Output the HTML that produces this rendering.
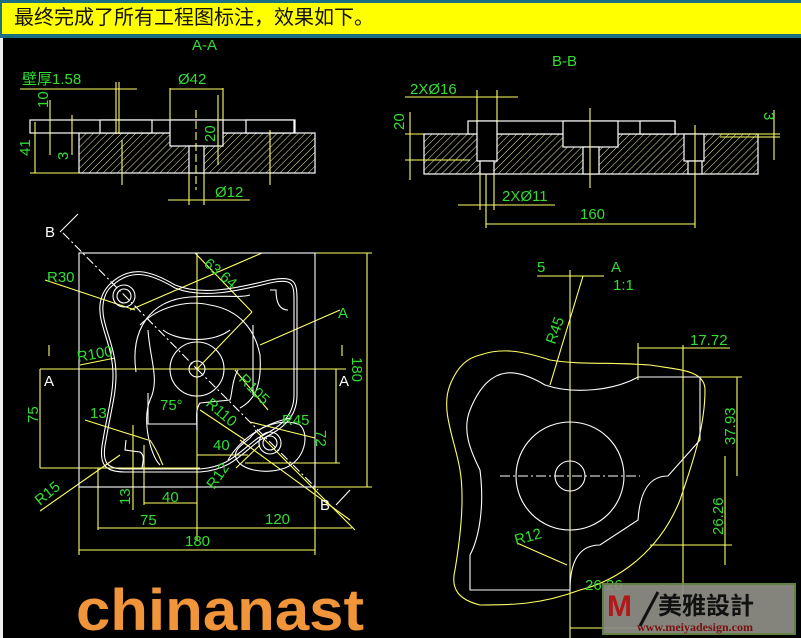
<!DOCTYPE html>
<html><head><meta charset="utf-8"><style>
html,body{margin:0;padding:0;background:#000;width:801px;height:638px;overflow:hidden}
.hdr{position:absolute;left:0;top:0;width:801px;height:38px;background:#1d6f84}
.hdr div{position:absolute;left:2px;top:3px;width:799px;height:31px;background:#ffff00;font-family:"Liberation Sans","Noto Sans CJK SC",sans-serif;font-size:20px;line-height:31px;color:#111;padding-left:12px;box-sizing:border-box}
svg{position:absolute;left:0;top:0}
.g{fill:#33dd33;font-family:"Liberation Sans Narrow","Liberation Sans",sans-serif;font-size:15px}
</style></head><body>
<div class="hdr"><div>最终完成了所有工程图标注，效果如下。</div></div>
<svg width="801" height="638" viewBox="0 0 801 638">
<defs><pattern id="h" width="5" height="5" patternUnits="userSpaceOnUse" patternTransform="rotate(45)"><line x1="0" y1="0" x2="0" y2="5" stroke="#eeeeaa" stroke-width="1"/></pattern></defs>
<rect x="0" y="38" width="3" height="600" fill="#eee"/>
<!-- A-A -->
<text class="g" x="192" y="50">A-A</text>
<g stroke="#fff" fill="none" stroke-width="1.2">
<rect x="79" y="133" width="236" height="40" fill="url(#h)"/>
<rect x="30" y="120" width="265" height="13" fill="#000"/>
<rect x="170" y="120" width="53" height="26" fill="#000"/>
<rect x="189" y="146" width="15" height="27" fill="#000"/>
<rect x="100" y="120" width="52" height="13" fill="#000"/>
<rect x="246" y="120" width="48" height="13" fill="#000"/>
</g>
<g stroke="#ffff66" fill="none" stroke-width="1.1">
<line x1="20" y1="89" x2="137" y2="89"/><line x1="116" y1="82" x2="116" y2="134"/><line x1="119" y1="82" x2="119" y2="134"/>
<line x1="35" y1="122" x2="35" y2="173"/><line x1="30" y1="173" x2="80" y2="173"/>
<line x1="50" y1="100" x2="50" y2="155"/><line x1="72" y1="115" x2="72" y2="155"/>
<line x1="170" y1="88" x2="170" y2="120"/><line x1="223" y1="88" x2="223" y2="120"/><line x1="170" y1="89" x2="223" y2="89"/>
<line x1="218" y1="95" x2="218" y2="165"/><line x1="196" y1="110" x2="196" y2="190" stroke-dasharray="8 3"/>
<line x1="168" y1="200" x2="250" y2="200"/><line x1="189" y1="173" x2="189" y2="205"/><line x1="204" y1="173" x2="204" y2="205"/>
<line x1="122" y1="140" x2="122" y2="185"/><line x1="270" y1="130" x2="270" y2="185"/>
</g>
<text class="g" x="22" y="84" font-size="13">壁厚1.58</text>
<text class="g" x="178" y="84" font-size="16">Ø42</text>
<text class="g" x="215" y="197" font-size="16">Ø12</text>
<text class="g" transform="translate(48,108) rotate(-90)">10</text>
<text class="g" transform="translate(30,156) rotate(-90)">41</text>
<text class="g" transform="translate(68,160) rotate(-90)">3</text>
<text class="g" transform="translate(215,142) rotate(-90)">20</text>
<!-- B-B -->
<text class="g" x="552" y="66">B-B</text>
<g stroke="#fff" fill="none" stroke-width="1.2">
<rect x="424" y="134" width="334" height="40" fill="url(#h)"/>
<rect x="468" y="121" width="207" height="13" fill="#000"/>
<rect x="563" y="121" width="55" height="26" fill="#000"/>
<rect x="583" y="147" width="16" height="27" fill="#000"/>
<rect x="477" y="121" width="20" height="40" fill="#000"/>
<rect x="480" y="161" width="14" height="13" fill="#000"/>
<rect x="684" y="134" width="20" height="27" fill="#000"/>
<rect x="688" y="161" width="14" height="13" fill="#000"/>
<rect x="640" y="121" width="35" height="13" fill="#000"/>
</g>
<g stroke="#ffff66" fill="none" stroke-width="1.1">
<line x1="405" y1="97" x2="518" y2="97"/><line x1="477" y1="90" x2="477" y2="121"/><line x1="497" y1="90" x2="497" y2="121"/>
<line x1="410" y1="112" x2="410" y2="180"/><line x1="405" y1="134" x2="424" y2="134"/><line x1="405" y1="160" x2="470" y2="160"/>
<line x1="458" y1="205" x2="555" y2="205"/><line x1="480" y1="174" x2="480" y2="210"/><line x1="494" y1="174" x2="494" y2="210"/>
<line x1="486" y1="224" x2="695" y2="224"/><line x1="486" y1="174" x2="486" y2="228"/><line x1="695" y1="125" x2="695" y2="228"/>
<line x1="590" y1="108" x2="590" y2="188"/>
<line x1="774" y1="110" x2="774" y2="160"/><line x1="720" y1="134" x2="780" y2="134"/><line x1="720" y1="137" x2="780" y2="137"/>
</g>
<text class="g" x="410" y="94">2XØ16</text>
<text class="g" x="502" y="201">2XØ11</text>
<text class="g" x="580" y="219">160</text>
<text class="g" transform="translate(404,130) rotate(-90)">20</text>
<text class="g" transform="translate(764,112) rotate(90)">3</text>
<!-- plan view -->
<g stroke="#ffff66" fill="none" stroke-width="1.1">
<line x1="40" y1="369" x2="346" y2="369"/><line x1="197" y1="253" x2="197" y2="540"/>
<line x1="79" y1="487" x2="372" y2="487"/><line x1="315" y1="253" x2="372" y2="253"/>
<line x1="367" y1="253" x2="367" y2="487"/>
<line x1="40" y1="369" x2="40" y2="468"/><line x1="40" y1="468" x2="200" y2="468"/>
<line x1="336" y1="369" x2="336" y2="463"/><line x1="245" y1="463" x2="340" y2="463"/>
<line x1="79" y1="487" x2="79" y2="555"/><line x1="315" y1="487" x2="315" y2="555"/><line x1="79" y1="550" x2="315" y2="550"/>
<line x1="98" y1="468" x2="98" y2="530"/><line x1="98" y1="528" x2="352" y2="528"/>
<line x1="133" y1="425" x2="133" y2="510"/><line x1="144" y1="445" x2="144" y2="505"/><line x1="144" y1="503" x2="197" y2="503"/>
<line x1="197" y1="455" x2="248" y2="455"/>
<line x1="130" y1="310" x2="262" y2="253"/><line x1="195" y1="253" x2="252" y2="312"/>
<line x1="197" y1="369" x2="252" y2="312"/>
<line x1="45" y1="280" x2="135" y2="310"/><line x1="80" y1="365" x2="115" y2="358"/>
<line x1="260" y1="345" x2="340" y2="310"/><line x1="40" y1="511" x2="120" y2="455"/>
<line x1="85" y1="420" x2="148" y2="440"/><line x1="235" y1="370" x2="268" y2="410"/>
<line x1="200" y1="410" x2="245" y2="440"/><line x1="250" y1="422" x2="315" y2="438"/>
<line x1="236" y1="468" x2="260" y2="445"/>
<line x1="255" y1="430" x2="355" y2="530"/><line x1="240" y1="440" x2="350" y2="520"/>
<line x1="49" y1="345" x2="49" y2="356"/><line x1="342" y1="345" x2="342" y2="356"/>
</g>
<g stroke="#fff" fill="none" stroke-width="1.1">
<rect x="79" y="253" width="236" height="234"/>
<line x1="63" y1="233" x2="197" y2="369" stroke-dasharray="9 3 2 3"/>
<line x1="197" y1="369" x2="318" y2="490" stroke-dasharray="9 3 2 3"/>
<line x1="60" y1="232" x2="78" y2="214"/><line x1="336" y1="505" x2="350" y2="490"/>
<circle cx="197" cy="369" r="27"/><circle cx="197" cy="369" r="8"/>
<circle cx="124" cy="296" r="11"/><circle cx="124" cy="296" r="7"/>
<circle cx="270" cy="443" r="11"/><circle cx="270" cy="443" r="7"/>
<path d="M110 284 C130 265 150 270 175 285 C200 295 230 290 270 280 C295 275 297 282 297 300 L297 395 C297 420 280 430 260 440 C240 455 230 470 200 472 L125 472 C105 472 98 465 103 440 C108 410 113 395 113 375 C113 345 98 325 100 305 C101 295 105 289 110 284 Z"/>
<path d="M112 286 C131 268 150 273 175 288 C200 298 230 293 270 283 C293 278 294 284 294 300 L294 395 C294 418 278 428 258 438 C238 453 228 467 200 469 L125 469 C107 469 101 463 106 440 C111 410 116 395 116 375 C116 345 101 325 103 305 C104 296 107 290 112 286 Z"/>
<path d="M140 325 C160 305 190 300 210 305 C240 310 255 330 260 355 C262 385 255 400 240 408"/>
<path d="M136 372 C130 330 150 300 190 297 C225 295 240 298 250 295"/>
<path d="M148 330 C150 360 160 380 150 400 C142 420 150 455 160 465"/>
<path d="M163 330 C175 340 210 345 230 330"/>
<path d="M270 290 L276 290 C276 300 278 310 288 310"/>
<path d="M148 393 L148 424 L197 424"/><path d="M253 325 L253 395"/>
<path d="M238 370 C232 380 232 395 230 400 L200 403 C195 410 197 420 197 430"/>
<path d="M150 440 C160 455 160 460 163 465" stroke="#ffff66"/>
<path d="M126 440 L125 450 L140 452 C145 455 143 462 142 468"/>
<path d="M250 438 C260 425 285 418 300 425 C310 435 305 460 285 468 C265 475 240 470 236 458 C233 450 243 444 250 438 Z"/>
<path d="M228 460 C240 440 260 425 290 418"/>
</g>
<text class="g" x="45" y="237" style="fill:#fff">B</text>
<text class="g" x="320" y="510" style="fill:#fff">B</text>
<text class="g" x="44" y="386" style="fill:#fff">A</text>
<text class="g" x="339" y="386" style="fill:#fff">A</text>
<text class="g" x="47" y="282">R30</text>
<text class="g" x="203" y="265" transform="rotate(40 203 265)">63.64</text>
<text class="g" x="338" y="318">A</text>
<text class="g" x="78" y="362" transform="rotate(-10 78 362)">R100</text>
<text class="g" x="238" y="380" transform="rotate(45 238 380)">R105</text>
<text class="g" x="160" y="410">75°</text>
<text class="g" x="205" y="405" transform="rotate(40 205 405)">R110</text>
<text class="g" x="90" y="418">13</text>
<text class="g" x="282" y="425">R45</text>
<text class="g" x="316" y="430" transform="rotate(90 316 430)">72</text>
<text class="g" x="213" y="450">40</text>
<text class="g" x="214" y="490" transform="rotate(-55 214 490)">R12</text>
<text class="g" x="40" y="506" transform="rotate(-40 40 506)">R15</text>
<text class="g" transform="translate(130,505) rotate(-90)">13</text>
<text class="g" x="162" y="502">40</text>
<text class="g" x="140" y="525">75</text>
<text class="g" x="265" y="524">120</text>
<text class="g" x="185" y="546">180</text>
<text class="g" transform="translate(38,423) rotate(-90)">75</text>
<text class="g" transform="translate(352,357) rotate(90)">180</text>
<!-- detail A -->
<g stroke="#ffff66" fill="none" stroke-width="1.1">
<line x1="537" y1="276" x2="604" y2="276"/><line x1="570" y1="270" x2="570" y2="640"/>
<line x1="583" y1="276" x2="550" y2="385"/>
<line x1="638" y1="348" x2="730" y2="348"/><line x1="638" y1="343" x2="638" y2="380"/><line x1="683" y1="345" x2="683" y2="600"/>
<line x1="700" y1="377" x2="742" y2="377"/><line x1="737" y1="377" x2="737" y2="476"/>
<line x1="725" y1="456" x2="725" y2="565"/><line x1="650" y1="545" x2="732" y2="545"/>
<line x1="570" y1="628" x2="690" y2="628"/>
<line x1="517" y1="543" x2="567" y2="565"/>
<path d="M480 355 C500 348 520 350 550 360 C580 365 610 362 650 365 C680 370 705 370 705 390 C705 430 690 470 680 500 C660 550 620 580 580 590 C540 605 510 605 480 605 C460 600 450 590 455 570 C460 540 465 500 460 470 C455 440 440 410 450 385 C458 365 468 358 480 355 Z"/>
</g>
<g stroke="#fff" fill="none" stroke-width="1.1">
<line x1="500" y1="476" x2="640" y2="476" stroke-dasharray="10 3 2 3"/>
<circle cx="570" cy="476" r="54"/><circle cx="570" cy="476" r="15"/>
<path d="M470 410 C490 360 520 370 545 385 C575 395 615 390 638 377 L700 377 L700 440 L668 476 C650 476 640 490 638 520 L600 545 C580 545 570 560 570 590 L470 590 L470 555 C478 540 485 510 480 470 C470 450 462 430 470 410 Z"/>
</g>
<text class="g" x="537" y="272">5</text>
<text class="g" x="611" y="272">A</text>
<text class="g" x="613" y="290">1:1</text>
<text class="g" x="555" y="345" transform="rotate(-70 555 345)">R45</text>
<text class="g" x="690" y="345">17.72</text>
<text class="g" transform="translate(735,445) rotate(-90)">37.93</text>
<text class="g" transform="translate(723,535) rotate(-90)">26.26</text>
<text class="g" x="516" y="545" transform="rotate(-15 516 545)">R12</text>
<text class="g" x="585" y="590">26.26</text>
<!-- meiya logo -->
<rect x="603" y="584" width="192" height="50" fill="#8f8f86" stroke="#6d8a4a" stroke-width="2" opacity="0.93"/>
<text x="607" y="616" font-family="Liberation Sans,sans-serif" font-weight="bold" font-size="30" fill="#b21818">M</text>
<line x1="640" y1="626" x2="658" y2="592" stroke="#111" stroke-width="3"/>
<text x="658" y="614" font-family="Liberation Sans,'Noto Sans CJK TC',sans-serif" font-weight="bold" font-size="24" fill="#111">美雅設計</text>
<text x="637" y="631" font-family="Liberation Serif,serif" font-weight="bold" font-size="12" fill="#7a1010">www.meiyadesign.com</text>
<text x="76" y="630" font-family="Liberation Sans,sans-serif" font-weight="bold" font-size="58" fill="#f0953a" textLength="288" lengthAdjust="spacingAndGlyphs">chinanast</text>
</svg>
</body></html>
